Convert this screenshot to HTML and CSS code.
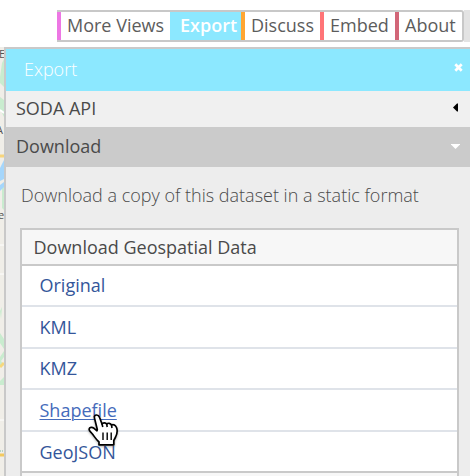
FILE: index.html
```html
<!DOCTYPE html>
<html lang="en">
<head>
<meta charset="utf-8">
<title>Export</title>
<link rel="stylesheet" href="styles.css">
</head>
<body>
<header class="topbar">
  <nav class="tabs">
    <a class="tab views"><span>More Views</span></a>
    <a class="tab export"><span>Export</span></a>
    <a class="tab discuss"><span>Discuss</span></a>
    <a class="tab embed"><span>Embed</span></a>
    <a class="tab about"><span>About</span></a>
  </nav>
  <div class="edge"></div>
</header>
<div class="workspace">
  <svg class="map" width="4" height="429" viewBox="0 0 4 429">
    <rect width="4" height="429" fill="#f0eee8"/>
    <path d="M2 16L4 12V40L0 36V30ZM0 50L4 53V70L0 62ZM2 140L4 136V163L2 161ZM0 264L2 260L1 272ZM0 286L4 292V302L0 296ZM0 310L4 304V310L1 314L4 318L0 320ZM0 334L4 330V338L0 338Z" fill="#c9eccf"/>
    <path d="M0 63L4 66" stroke="#fff" stroke-width="2"/>
    <path d="M0 109H4" stroke="#f7d57c" stroke-width="3"/>
    <path d="M0 121L4 113V132L0 134ZM0 138L4 135V140L0 144Z" fill="#a5d6fb"/>
    <path d="M0 198H4M0 227H4M0 373H4" stroke="#fff"/>
    <path d="M0 320L4 316" stroke="#f6d87e" stroke-width="3"/>
    <path d="M0 408H4" stroke="#f2c95f" stroke-width="3"/>
    <path d="M0 404H4" stroke="#74b9a0" stroke-dasharray="1 1"/>
    <g class="place"><text x="-1" y="11">E</text><text x="-4" y="87">A</text><text x="-2" y="172">e</text></g>
  </svg>
  <main class="panel">
    <div class="title"><span>Export</span>
      <svg class="close" width="9" height="9" viewBox="0 0 9 9"><path d="M1.300 1.300L7.700 7.700M7.700 1.300L1.300 7.700" stroke="#fff" stroke-width="2.700"/></svg>
    </div>
    <div class="section soda"><span>SODA API</span>
      <svg width="5" height="9" viewBox="0 0 5 9"><path d="M0 4.500L4 .5H5V8.500H4Z"/></svg>
    </div>
    <div class="section download"><span>Download</span>
      <svg width="9" height="5" viewBox="0 0 9 5"><path d="M0 0H9V.6L4.500 5L0 .6Z" fill="#fff"/></svg>
    </div>
    <div class="content">
      <p class="intro"><span>Download a copy of this dataset in a static format</span></p>
      <div class="formats">
        <h2><span>Download Geospatial Data</span></h2>
        <ul>
          <li><a>Original</a></li>
          <li class="tall"><a>KML</a></li>
          <li><a>KMZ</a></li>
          <li class="tall"><a class="active">Shapefile</a></li>
          <li><a>GeoJSON</a></li>
        </ul>
        <div class="next"></div>
      </div>
    </div>
  </main>
  <svg class="cursor" width="32" height="35" viewBox="0 0 32 35">
    <path d="M8.200 3C10 2.800 11 4 11.600 5.500L14 12C15 10.300 17.800 10.500 18.700 12.200C20 10.700 22.500 11 23.500 13C25.500 11.800 27.500 13.200 28.500 15.500C29.700 18.500 29.300 21.500 27.600 25L25.800 28.500V32.800H11V30C8 27.500 6.500 24.500 4 21.500C2.500 19.800 1 18.800 1.100 17.200C1.500 15 4.200 15 6 16.300L9 18.800L9.300 17.500L6.700 7C6 4.800 6.500 3.300 8.200 3Z" fill="#fff" stroke="#000" stroke-width="1.700" stroke-linejoin="round"/>
    <path d="M14 12L14.800 15M18.700 12.200L19.200 15M23.500 13L24 16" stroke="#000" stroke-width="1.600"/>
    <path d="M15 20.500V28M19.200 20.500V28M23.200 20.500V28" stroke="#000" stroke-width="1.400"/>
  </svg>
</div>
</body>
</html>
```
FILE: styles.css
```css
* { box-sizing: border-box; }
body { margin: 0; width: 470px; height: 476px; overflow: hidden; background: #fff; color: #4a4a4a; font-family: "Open Sans", sans-serif; font-size: 18px; }
.topbar { display: flex; justify-content: flex-end; height: 47px; padding-top: 10px; }
.tabs { display: flex; width: 407px; height: 32px; border: 2px solid #c8c8c8; border-left: 0; border-radius: 0 3px 3px 0; }
.edge { width: 6px; height: 32px; background: #e3e3e3; }
.tab { height: 28px; line-height: 27px; padding-left: 6px; border-left: 4px solid; white-space: nowrap; }
.tab span { color: #5c5c5c; }
.views { width: 113px; border-color: #ed77e4; }
.export { width: 71px; border-color: #8ce8ff; background: #8ce8ff; font-weight: 600; }
.export span { color: #fff; }
.discuss { width: 79px; border-color: #ffa633; }
.embed { width: 75px; border-color: #ff7477; }
.about { width: 67px; border-color: #d26678; }
.workspace { position: relative; display: flex; height: 429px; }
.map { flex: none; }
.place { fill: #555; font-size: 11px; }
.panel { width: 466px; height: 429px; border: solid #c9c9c9; border-width: 2px 0 0 2px; background: #ededed; overflow: hidden; }
.title, .section { display: flex; align-items: center; justify-content: space-between; }
.title span, .section span { padding-bottom: 2px; }
.title { height: 42px; padding: 0 7px 0 18px; background: #8ce8ff; color: #fff; font-weight: 300; }
.close { margin-top: -6px; }
.section { padding-left: 10px; }
.soda { height: 36px; padding-right: 12px; background: #f0f0f0; }
.soda svg { margin-top: -3px; }
.download { height: 40px; padding-right: 10px; background: #cbcbcb; }
.download svg { margin-top: -2px; }
.content { padding: 16px 11px 0 14px; }
.intro { margin: 0 0 20px 1px; line-height: 25px; font-weight: 300; white-space: nowrap; }
.formats { width: 439px; border: 2px solid #c9c9c9; }
h2 { height: 36px; margin: 0; padding-left: 11.5px; border-bottom: 2px solid #c9c9c9; background: #f7f7f7; font-size: 18px; font-weight: 400; line-height: 35px; }
ul { margin: 0; padding: 0; list-style: none; background: #fff; }
li { height: 41px; padding-left: 17.5px; border-bottom: 2px solid #dfe3e9; line-height: 39px; }
.tall { height: 42px; line-height: 40px; }
li:last-child { border-color: #c9c9c9; line-height: 41px; }
li a { color: #34569a; }
li .active { color: #456bbb; text-decoration: underline; text-decoration-thickness: 1px; text-underline-offset: 2px; }
.next { height: 10px; background: #f7f7f7; }
.cursor { position: absolute; left: 88px; top: 365px; filter: drop-shadow(0 1px 1px rgba(0,0,0,.3)); }
```
